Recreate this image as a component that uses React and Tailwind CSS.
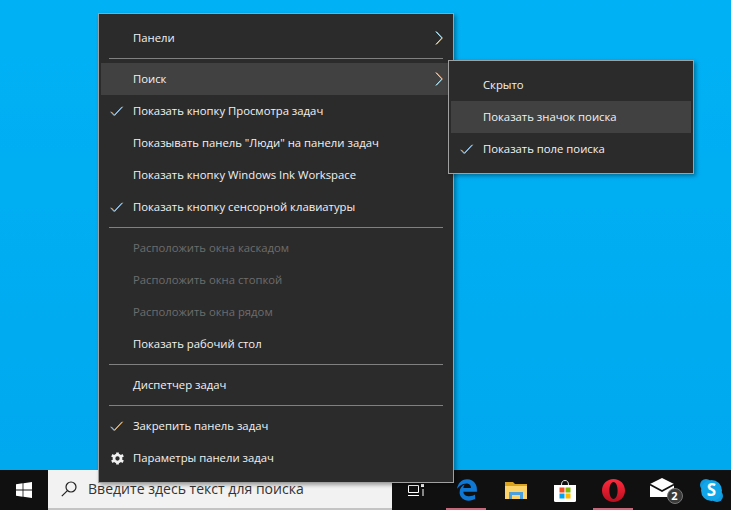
import { FaEdgeLegacy } from "react-icons/fa6";

function Check() {
  return (
    <svg width="14" height="11" viewBox="0 0 14 11" fill="none" strokeWidth="1">
      <path d="M1.3 5.8 L4.7 9.4 L12.7 0.8" stroke="#f2b05a" />
      <path d="M0.6 5.8 L4 9.4 L12 0.8" stroke="#8fc4f2" />
    </svg>
  );
}

function Chevron({ warm }) {
  return (
    <svg width="8" height="14" viewBox="0 0 8 14" fill="none" strokeWidth="1">
      <path d="M1.4 0.6 L7.4 7 L1.4 13.4" stroke={warm ? "#f2a36a" : "#e8c98f"} />
      <path d="M0.8 0.6 L6.8 7 L0.8 13.4" stroke="#a8e0f5" />
    </svg>
  );
}

function Gear() {
  return (
    <svg width="13" height="13" viewBox="0 0 24 24" fill="none">
      <circle cx="12" cy="12" r="6.5" stroke="#f0f0f0" strokeWidth="5" />
      <path d="M12 1 V6 M12 18 V23 M1.5 6 L6 8.6 M18 15.4 L22.5 18 M1.5 18 L6 15.4 M18 8.6 L22.5 6" stroke="#f0f0f0" strokeWidth="5" />
    </svg>
  );
}

function Row({ label, check, hover, arrow, disabled, gear }) {
  return (
    <div className={`flex h-8 items-center ${hover ? "bg-[#414141]" : ""}`}>
      <div className="flex w-8 shrink-0 justify-center">
        {check && <Check />}
        {gear && <Gear />}
      </div>
      <div className={`flex-1 ${disabled ? "text-[#6d6d6d]" : "text-[#f2f2f2]"}`}>{label}</div>
      {arrow && (
        <div className="mr-[8px] flex">
          <Chevron warm={hover} />
        </div>
      )}
    </div>
  );
}

function Sep() {
  return (
    <div className="flex h-[9px] items-center px-[8px]">
      <div className="h-px w-full bg-[#808080]" />
    </div>
  );
}

function TaskButton({ active, children }) {
  return (
    <div className="relative flex h-10 w-[49px] shrink-0 items-center justify-center">
      {children}
      {active && <div className="absolute bottom-0 left-[4px] h-[2px] w-[40px] bg-[#c8667a]" />}
    </div>
  );
}

export default function App() {
  return (
    <div className="relative flex h-[510px] w-[731px] flex-col overflow-hidden bg-gradient-to-b from-[#00b2f5] to-[#00a8ee] font-['Open_Sans','Noto_Sans',sans-serif] text-[11.3px]">
      <div className="flex-1" />

      {/* taskbar */}
      <div className="flex h-10 items-center bg-[#101010]">
        <div className="flex h-10 w-[48px] shrink-0 items-center justify-center">
          <svg width="16" height="16" viewBox="0 0 16 16" fill="#fff">
            <path d="M0 2.2 L6.6 1.3 V7.5 H0 Z M7.4 1.2 L16 0 V7.5 H7.4 Z M0 8.4 H6.6 V14.7 L0 13.8 Z M7.4 8.4 H16 V16 L7.4 14.8 Z" />
          </svg>
        </div>
        <div className="flex h-10 w-[344px] shrink-0 items-center border-b-2 border-[#c4c4c4] bg-[#f2f2f2] pl-[13px] text-[14.05px] text-[#333]">
          <svg width="16" height="16" viewBox="0 0 16 16" fill="none" stroke="#222" strokeWidth="1.2" className="mr-[11px]">
            <circle cx="10" cy="6" r="5" />
            <path d="M6.4 9.6 L0.8 15.2" />
          </svg>
          Введите здесь текст для поиска
        </div>

        <div className="flex h-10 w-[50px] shrink-0 items-center pl-[16px]">
          <svg width="16" height="16" viewBox="0 0 16 16" fill="none" stroke="#fff" strokeWidth="1">
            <path d="M0 .5 H11 M0.5 3.5 H10.5 V10.5 H0.5 Z M0 13.5 H11 M15 7 V14" />
            <rect x="13" y="2" width="3" height="3" fill="#fff" stroke="none" />
          </svg>
        </div>

        <TaskButton active>
          <FaEdgeLegacy size={22} color="#0f78d4" />
        </TaskButton>

        <TaskButton>
          <svg width="22" height="18" viewBox="0 0 22 18">
            <path d="M0 1 H8 L10 3 H22 V18 H0 Z" fill="#d9a21f" />
            <path d="M0 5 H22 V18 H0 Z" fill="#fbd36a" />
            <path d="M4 18 V11 H18 V18 H15 V14 H7 V18 Z" fill="#4b9fdc" />
          </svg>
        </TaskButton>

        <TaskButton>
          <svg width="24" height="24" viewBox="0 0 24 24">
            <path d="M8.5 7 A3.5 4.5 0 0 1 15.5 7" fill="none" stroke="#e8e8e8" strokeWidth="1" />
            <path d="M1 7 H23 V22.5 A1.5 1.5 0 0 1 21.5 24 H2.5 A1.5 1.5 0 0 1 1 22.5 Z" fill="#fff" />
            <rect x="6.5" y="9.5" width="5" height="5" fill="#f25022" />
            <rect x="12.5" y="9.5" width="5" height="5" fill="#7fba00" />
            <rect x="6.5" y="15.5" width="5" height="5" fill="#00a4ef" />
            <rect x="12.5" y="15.5" width="5" height="5" fill="#ffb900" />
          </svg>
        </TaskButton>

        <TaskButton active>
          <svg width="23" height="23" viewBox="0 0 23 23">
            <defs>
              <linearGradient id="operaRed" x1="0" y1="0" x2="0" y2="1">
                <stop offset="0" stopColor="#ff2a3c" />
                <stop offset="1" stopColor="#b80f20" />
              </linearGradient>
            </defs>
            <path
              fillRule="evenodd"
              fill="url(#operaRed)"
              d="M11.5 0 C18 0 23 5 23 11.5 C23 18 18 23 11.5 23 C5 23 0 18 0 11.5 C0 5 5 0 11.5 0 Z M11.5 3 C9 3 7.4 6.8 7.4 11.5 C7.4 16.2 9 20 11.5 20 C14 20 15.6 16.2 15.6 11.5 C15.6 6.8 14 3 11.5 3 Z"
            />
          </svg>
        </TaskButton>

        <TaskButton>
          <div className="relative flex h-[24px] w-[26px] items-start">
            <svg width="24" height="19" viewBox="0 0 24 19">
              <path d="M12 0 L24 6 V19 H0 V6 Z" fill="#fff" />
              <path d="M0 6.5 L12 13 L24 6.5" fill="none" stroke="#101010" strokeWidth="1.6" />
            </svg>
            <div className="absolute bottom-[-2px] right-[-7px] flex h-[16px] w-[16px] items-center justify-center rounded-full border border-[#777] bg-[#3a3a3a] text-[11px] font-bold text-white">
              2
            </div>
          </div>
        </TaskButton>

        <TaskButton>
          <div className="relative flex h-[23px] w-[23px] items-center justify-center">
            <div className="absolute left-0 top-0 h-[12px] w-[12px] rounded-full bg-[#0f9be0]" />
            <div className="absolute bottom-0 right-0 h-[12px] w-[12px] rounded-full bg-[#0f9be0]" />
            <div className="absolute inset-[1px] rounded-full bg-[#12a5e8]" />
            <span className="relative text-[17px] font-bold text-white">S</span>
          </div>
        </TaskButton>
      </div>

      {/* context menu */}
      <div className="absolute left-[98px] top-[13px] w-[356px] border border-[#a0a0a0] bg-[#2b2b2b] px-[2px] py-[8px] shadow-[2px_2px_4px_rgba(0,0,0,0.35)]">
        <Row label="Панели" arrow />
        <Sep />
        <Row label="Поиск" arrow hover />
        <Row label="Показать кнопку Просмотра задач" check />
        <Row label='Показывать панель "Люди" на панели задач' />
        <Row label="Показать кнопку Windows Ink Workspace" />
        <Row label="Показать кнопку сенсорной клавиатуры" check />
        <Sep />
        <Row label="Расположить окна каскадом" disabled />
        <Row label="Расположить окна стопкой" disabled />
        <Row label="Расположить окна рядом" disabled />
        <Row label="Показать рабочий стол" />
        <Sep />
        <Row label="Диспетчер задач" />
        <Sep />
        <Row label="Закрепить панель задач" check />
        <Row label="Параметры панели задач" gear />
      </div>

      {/* submenu */}
      <div className="absolute left-[448px] top-[60px] w-[246px] border border-[#a0a0a0] bg-[#2b2b2b] px-[2px] py-[8px] shadow-[2px_2px_4px_rgba(0,0,0,0.35)]">
        <Row label="Скрыто" />
        <Row label="Показать значок поиска" hover />
        <Row label="Показать поле поиска" check />
      </div>
    </div>
  );
}
